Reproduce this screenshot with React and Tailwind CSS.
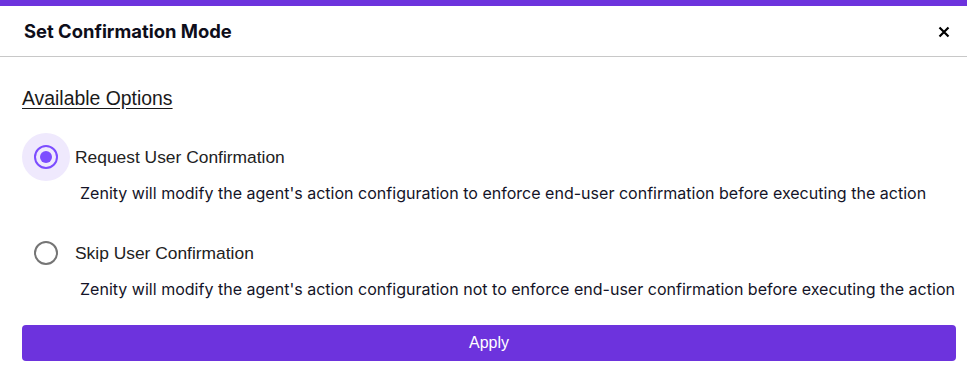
import { useState } from 'react';

const OPTIONS = [
  {
    id: 'request',
    label: 'Request User Confirmation',
    description:
      "Zenity will modify the agent's action configuration to enforce end-user confirmation before executing the action",
  },
  {
    id: 'skip',
    label: 'Skip User Confirmation',
    description:
      "Zenity will modify the agent's action configuration not to enforce end-user confirmation before executing the action",
  },
];

function Radio({ checked }) {
  return (
    <span
      className={`flex items-center justify-center w-12 h-12 rounded-full ${
        checked ? 'bg-[#efe9fd]' : ''
      }`}
    >
      <span
        className={`flex items-center justify-center w-[24px] h-[24px] rounded-full border-2 ${
          checked ? 'border-[#7c4dff]' : 'border-[#757575]'
        }`}
      >
        {checked && <span className="w-[12px] h-[12px] rounded-full bg-[#7c4dff]" />}
      </span>
    </span>
  );
}

export default function App() {
  const [mode, setMode] = useState('request');

  return (
    <div className="w-[967px] h-[382px] bg-white flex flex-col font-['Liberation_Sans',Arial,sans-serif] text-[#1a1a1a]">
      <div className="h-[6px] bg-[#6d33dd]" />
      <div className="h-[51px] pt-[2px] flex items-center justify-between pl-[24px] pr-[11px] border-b border-[#c8c8c8]">
        <h2 className="text-[18.4px] font-bold text-[#0e0e1a] font-['Inter',sans-serif]">
          Set Confirmation Mode
        </h2>
        <button className="w-6 h-6 flex items-center justify-center text-black">
          <svg width="12" height="12" viewBox="0 0 12 12" fill="none">
            <path d="M1.5 1.5L10.5 10.5M10.5 1.5L1.5 10.5" stroke="currentColor" strokeWidth="2.2" />
          </svg>
        </button>
      </div>

      <div className="pl-[22px] pr-[11px] flex flex-col">
        <div className="mt-[29px] text-[19.4px] leading-[24px] underline underline-offset-[3px] text-[#1a1a1a]">
          Available Options
        </div>

        <div className="mt-[23px] flex flex-col">
          {OPTIONS.map((opt, i) => (
            <div key={opt.id} className={i > 0 ? 'mt-[24px]' : ''}>
              <label className="flex items-center cursor-pointer" onClick={() => setMode(opt.id)}>
                <Radio checked={mode === opt.id} />
                <span className="ml-[5px] text-[17.4px] text-[#222]">{opt.label}</span>
              </label>
              <p className="ml-[58px] text-[16.05px] leading-[24px] whitespace-nowrap text-[#141428] font-['Inter',sans-serif]">
                {opt.description}
              </p>
            </div>
          ))}
        </div>

        <button className="mt-[24px] h-[36px] w-full rounded-[4px] bg-[#6d33dd] text-white text-[16px]">
          Apply
        </button>
      </div>
    </div>
  );
}
